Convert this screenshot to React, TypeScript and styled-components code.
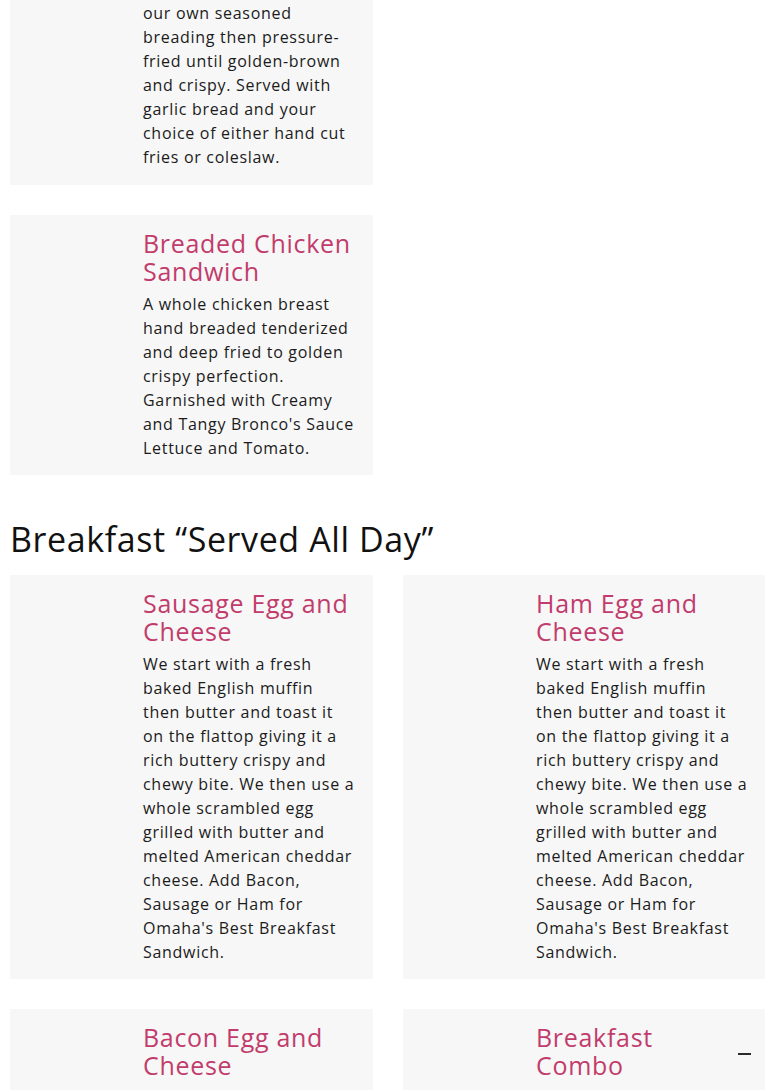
import styled, { createGlobalStyle } from "styled-components";

const GlobalStyle = createGlobalStyle`
  body {
    margin: 0;
    background: #ffffff;
    font-family: "Open Sans", "Liberation Sans", sans-serif;
    color: #1b1b1b;
  }
`;

const Page = styled.div(() => ({
  padding: "0 10px",
  width: "755px",
  boxSizing: "border-box",
}));

const Grid = styled.div(() => ({
  display: "grid",
  gridTemplateColumns: "363px 362px",
  columnGap: "30px",
  rowGap: "30px",
}));

const Card = styled.div<{ $cut?: boolean }>((props) => ({
  display: "grid",
  gridTemplateColumns: "133px 1fr",
  background: "#f7f7f7",
  padding: props.$cut ? "1px 14px 16px 0" : "14px 14px 15px 0",
}));

const Thumb = styled.div(() => ({
  background: "transparent",
}));

const Body = styled.div(() => ({
  display: "flex",
  flexDirection: "column",
  gap: "7px",
}));

const TitleRow = styled.div(() => ({
  display: "flex",
  alignItems: "center",
  justifyContent: "space-between",
  gap: "10px",
}));

const Title = styled.h3(() => ({
  margin: 0,
  fontFamily: '"Open Sans", "Liberation Sans", sans-serif',
  fontWeight: 400,
  fontSize: "25px",
  lineHeight: "28px",
  letterSpacing: "0.7px",
  color: "#c13c6c",
}));

const Price = styled.span(() => ({
  display: "block",
  width: "13px",
  height: "2px",
  background: "#2b2b2b",
  marginTop: "6px",
  flexShrink: 0,
}));

const Desc = styled.p(() => ({
  margin: 0,
  fontSize: "16px",
  lineHeight: "24px",
  letterSpacing: "0.7px",
  color: "#1b1b1b",
}));

const Line = styled.span(() => ({
  display: "block",
  whiteSpace: "nowrap",
}));

const SectionTitle = styled.h2(() => ({
  margin: "44px 0 15px",
  fontFamily: '"Open Sans", "Liberation Sans", sans-serif',
  fontWeight: 500,
  fontSize: "34px",
  lineHeight: "41px",
  letterSpacing: "0.6px",
  color: "#111",
}));

type Item = {
  title?: string;
  desc?: string;
  lines?: string[];
  price?: boolean;
  cut?: boolean;
};

const MenuCard: React.FC<{ item: Item }> = ({ item }) => (
  <Card $cut={item.cut}>
    <Thumb />
    <Body>
      {item.title && (
        <TitleRow>
          <Title>{item.title}</Title>
          {item.price && <Price />}
        </TitleRow>
      )}
      {item.desc && <Desc>{item.desc}</Desc>}
      {item.lines && (
        <Desc>
          {item.lines.map((l, i) => (
            <Line key={i}>{l} </Line>
          ))}
        </Desc>
      )}
    </Body>
  </Card>
);

// line breaks as on the live menu
const eggLines = [
  "We start with a fresh",
  "baked English muffin",
  "then butter and toast it",
  "on the flattop giving it a",
  "rich buttery crispy and",
  "chewy bite. We then use a",
  "whole scrambled egg",
  "grilled with butter and",
  "melted American cheddar",
  "cheese. Add Bacon,",
  "Sausage or Ham for",
  "Omaha's Best Breakfast",
  "Sandwich.",
];

const App = (): JSX.Element => {
  return (
    <>
      <GlobalStyle />
      <Page>
        <Grid>
          <MenuCard
            item={{
              cut: true,
              desc: "our own seasoned breading then pressure-fried until golden-brown and crispy. Served with garlic bread and your choice of either hand cut fries or coleslaw.",
            }}
          />
          <div />
          <MenuCard
            item={{
              title: "Breaded Chicken Sandwich",
              desc: "A whole chicken breast hand breaded tenderized and deep fried to golden crispy perfection. Garnished with Creamy and Tangy Bronco's Sauce Lettuce and Tomato.",
            }}
          />
          <div />
        </Grid>
        <SectionTitle>Breakfast “Served All Day”</SectionTitle>
        <Grid>
          <MenuCard item={{ title: "Sausage Egg and Cheese", lines: eggLines }} />
          <MenuCard item={{ title: "Ham Egg and Cheese", lines: eggLines }} />
          <MenuCard item={{ title: "Bacon Egg and Cheese" }} />
          <MenuCard item={{ title: "Breakfast Combo", price: true }} />
        </Grid>
      </Page>
    </>
  );
};

export default App;
